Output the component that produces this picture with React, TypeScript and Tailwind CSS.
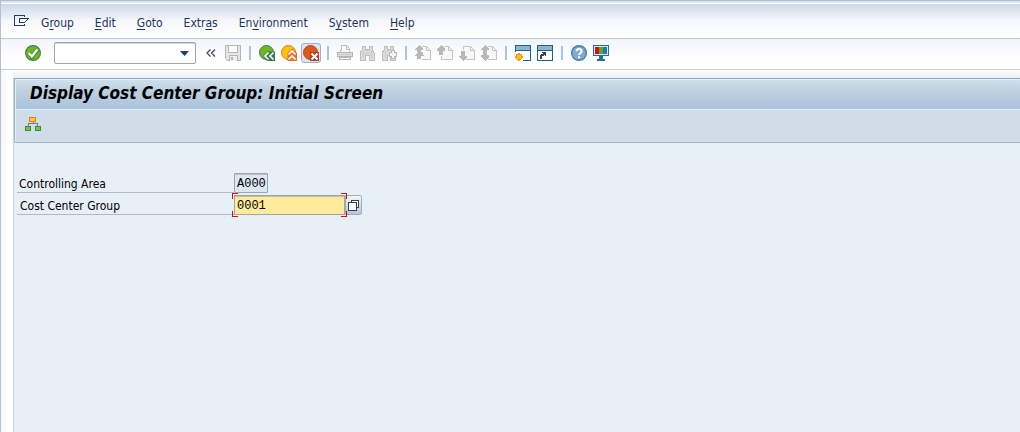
import type { ReactNode } from "react";

const menuItems = [
  { before: "G", key: "r", after: "oup" },
  { before: "", key: "E", after: "dit" },
  { before: "", key: "G", after: "oto" },
  { before: "Extr", key: "a", after: "s" },
  { before: "En", key: "v", after: "ironment" },
  { before: "S", key: "y", after: "stem" },
  { before: "", key: "H", after: "elp" },
];

function Icon({ children, crisp = false }: { children: ReactNode; crisp?: boolean }) {
  return (
    <svg
      width="16"
      height="16"
      viewBox="0 0 16 16"
      fill="none"
      shapeRendering={crisp ? "crispEdges" : "auto"}
      aria-hidden="true"
    >
      {children}
    </svg>
  );
}

function ToolButton({
  label,
  active = false,
  disabled = false,
  children,
}: {
  label: string;
  active?: boolean;
  disabled?: boolean;
  children: ReactNode;
}) {
  return (
    <button
      type="button"
      aria-label={label}
      title={label}
      disabled={disabled}
      className={
        active
          ? "mx-px flex h-5 w-5 shrink-0 items-center justify-center rounded-[3px] border border-[#a3aec6] bg-[#dfe5f0]"
          : "flex h-5 w-[22px] shrink-0 items-center justify-center"
      }
    >
      {children}
    </button>
  );
}

function Separator() {
  return (
    <div className="flex w-3 shrink-0 justify-center">
      <div className="h-[14px] w-[2px] bg-[#aac4dc]" />
    </div>
  );
}

/* ICONS */

function EnterIcon() {
  return (
    <Icon>
      <circle cx="8" cy="8" r="7.4" fill="#71b51d" stroke="#438358" strokeWidth="1.2" />
      <path d="M3.6 8.2 6.8 11.8 12.6 4.6" stroke="#3f8a35" strokeWidth="4" />
      <path d="M3.6 8 6.8 11.4 12.4 4.4" stroke="#fff" strokeWidth="2.3" />
    </Icon>
  );
}

function SaveIcon() {
  return (
    <Icon crisp>
      <path d="M.5.5h15v15h-13l-2-2z" fill="#e6e6e6" stroke="#b5b5b5" />
      <path d="M3.5.5h9v7h-9z" fill="#fafafa" stroke="#b5b5b5" />
      <path d="M4.500 15.500v-5h8v5" fill="#f0f0f0" stroke="#b5b5b5" />
      <path d="M6 12h2v3H6z" fill="#b5b5b5" />
    </Icon>
  );
}

function BackIcon() {
  return (
    <Icon>
      <circle cx="7.5" cy="7.5" r="7" fill="#72b61f" stroke="#397e50" />
      <path d="M4 11 8.500 6.500H16V16H8z" fill="#397e50" />
      <path d="M9.500 7.500 6 11l3.500 3.500M14.500 7.500 11 11l3.500 3.500" stroke="#fff" strokeWidth="1.6" />
    </Icon>
  );
}

function ExitIcon() {
  return (
    <Icon>
      <circle cx="7.5" cy="7.5" r="7" fill="#ffc20e" stroke="#e57522" />
      <path d="M6.5 8 11 3.5 16 8v8H6.5z" fill="#e57027" />
      <path d="m7.5 9.5 3.5-3.5 3.5 3.5M7.5 14.5 11 11l3.5 3.5" stroke="#fff" strokeWidth="1.6" />
    </Icon>
  );
}

function CancelIcon() {
  return (
    <Icon>
      <circle cx="7.5" cy="7.5" r="7" fill="#dc5917" stroke="#b7471d" />
      <path d="M7 7h9v9H7z" fill="#b3401c" />
      <path d="m8.5 8.5 6 6M14.5 8.5l-6 6" stroke="#fff" strokeWidth="2" />
    </Icon>
  );
}

function PrintIcon() {
  return (
    <Icon crisp>
      <path d="M3.500 8V5.500h1V.500h5l3 3V8" fill="#fafafa" stroke="#bdbdbd" />
      <path d="M9.5.500v3.500h3" stroke="#bdbdbd" />
      <path d="M.5 7.500h15v4H.5z" fill="#dedede" stroke="#b5b5b5" />
      <path d="M2 9.500h12" stroke="#c8c8c8" />
      <path d="M2.500 12.500h11v2h-11z" fill="#fafafa" stroke="#b5b5b5" />
    </Icon>
  );
}

function FindIcon() {
  return (
    <Icon crisp>
      <path
        d="M3 1h3v3h4V1h3v4l2 3v7h-5v-5H6v5H1V8l2-3z"
        fill="#dcdcdc"
        stroke="#bebebe"
      />
      <path d="M6 5h4M6 8h4M4 6v7M12 6v7" stroke="#c9c9c9" />
    </Icon>
  );
}

function FindNextIcon() {
  return (
    <Icon crisp>
      <path
        d="M3 1h3v3h3V1h3v4l2 3v7H9v-5H6v5H1V8l2-3z"
        fill="#dcdcdc"
        stroke="#bebebe"
      />
      <path d="M6 5h3M4 6v7" stroke="#c9c9c9" />
      <path
        d="M10.5 5.5h3v2h2v4h-2v2h-3v-2h-2v-4h2z"
        fill="#f5f5f5"
        stroke="#b5b5b5"
      />
    </Icon>
  );
}

function PageIcon({ arrows }: { arrows: string }) {
  return (
    <Icon crisp>
      <path d="M4.500 1.500h7l4 4v9h-11z" fill="#f8f8f8" stroke="#c4c4c4" />
      <path d="M11.5 1v4.5H16" stroke="#c4c4c4" />
      <path d={arrows} fill="#b8b8b8" stroke="#f8f8f8" strokeWidth="2" paintOrder="stroke" />
    </Icon>
  );
}

const firstPage = "M4 0l4 4v1H6v2h2v3l1 1H6v3H2v-3H0v-1l3-3H2V5H0V4z";
const previousPage = "M4 0l4 4v2H6v4H2V6H0V4z";
const nextPage = "M2 6h4v5h2v1l-4 4-4-4v-1h2z";
const lastPage = "M4 0l4 4v1H6v5h2v2l-4 4-4-4v-2h2V5H0V4z";

function NewSessionIcon() {
  return (
    <Icon crisp>
      <path d="M0 0h16v16H0z" fill="#17648f" />
      <path d="M1 1h14v4H1z" fill="#8fb2d2" />
      <path d="M1 6h14v9H1z" fill="#fff" />
      <path d="M0 7h8v9H0z" fill="#fff" />
      <path d="M4 8v8M0 12h8M1.500 9.500l5 5M6.500 9.500l-5 5" stroke="#f39a16" strokeWidth="1.5" />
      <circle cx="4" cy="12" r="2.2" fill="#ffc400" />
    </Icon>
  );
}

function ShortcutIcon() {
  return (
    <Icon crisp>
      <path d="M0 0h16v16H0z" fill="#17648f" />
      <path d="M1 1h14v4H1z" fill="#8fb2d2" />
      <path d="M1 6h14v9H1z" fill="#fff" />
      <path d="M4 14v-3l3-2" stroke="#404040" strokeWidth="2" />
      <path d="M4 7h5v5z" fill="#404040" />
    </Icon>
  );
}

function HelpIcon() {
  return (
    <Icon>
      <circle cx="8" cy="8" r="7.3" fill="#83aace" stroke="#417fa8" strokeWidth="1.4" />
      <path d="M5.6 6.2c0-3 5-3 5 0 0 1.8-2.5 1.7-2.5 3.8" stroke="#fff" strokeWidth="1.9" />
      <path d="M7 11.2h2.1v2H7z" fill="#fff" />
    </Icon>
  );
}

function LayoutIcon() {
  return (
    <Icon crisp>
      <path d="M0 0h16v11H0z" fill="#24709a" />
      <path d="M1 1h14v9H1z" fill="#dce7f0" />
      <path d="M2 2h4v7H2z" fill="#d40d16" />
      <path d="M6 2h4v7H6z" fill="#5baa1d" />
      <path d="M10 2h4v7h-4z" fill="#2475bd" />
      <path d="M6 11h4v3H6z" fill="#24709a" />
      <path d="M4 14h8v2H4z" fill="#24709a" />
    </Icon>
  );
}

function HierarchyIcon() {
  return (
    <Icon crisp>
      <path d="M8 6v2M3.5 11V7.500h9V11" stroke="#71777a" />
      <path d="M4.500 1.500h6v4h-6z" fill="#ffc928" stroke="#e77922" />
      <path d="M.5 10.500h5v4H.5zM10.500 10.500h5v4h-5z" fill="#83bf28" stroke="#3d8654" />
    </Icon>
  );
}

/* Red corner marks around the field that has the focus */
function FocusCorners() {
  return (
    <>
      <span className="pointer-events-none absolute -top-[2px] -left-[2px] h-[6px] w-[6px] border-t border-l border-[#e60012]" />
      <span className="pointer-events-none absolute -top-[2px] -right-[2px] h-[6px] w-[6px] border-t border-r border-[#e60012]" />
      <span className="pointer-events-none absolute -bottom-[2px] -left-[2px] h-[6px] w-[6px] border-b border-l border-[#e60012]" />
      <span className="pointer-events-none absolute -right-[2px] -bottom-[2px] h-[6px] w-[6px] border-r border-b border-[#e60012]" />
    </>
  );
}

export default function App() {
  return (
    <div className="flex min-h-screen flex-col border-l border-[#b4bfd2] bg-white font-['DejaVu_Sans_Condensed','DejaVu_Sans',sans-serif] text-[12px] text-black">
      {/* WINDOW EDGE */}
      <div className="h-1 border-t border-b border-t-[#aebbd0] border-b-white bg-[#dce5f0]" />

      {/* MENU BAR */}
      <nav
        aria-label="Menu"
        className="flex h-[35px] items-center border-b border-[#c2c8d6] bg-linear-to-b from-[#cbd7e8] via-[#f6f8fb] via-50% to-white pt-1 pl-[13px] text-[#1f3263]"
      >
        <button type="button" aria-label="System menu" className="mr-3 pb-1">
          <svg
            width="15"
            height="12"
            viewBox="0 0 15 12"
            fill="none"
            stroke="#223b6d"
            shapeRendering="crispEdges"
            aria-hidden="true"
          >
            <path d="M10.5 2V.5H.5v10h10V9" />
            <path d="M14.5 3.5h-9v4h5l4-4" fill="#fff" />
          </svg>
        </button>
        <div className="flex gap-[21px]">
          {menuItems.map((item) => (
            <button key={item.before + item.key + item.after} type="button">
              {item.before}
              <span className="underline underline-offset-2">{item.key}</span>
              {item.after}
            </button>
          ))}
        </div>
      </nav>

      {/* STANDARD TOOLBAR */}
      <div
        role="toolbar"
        aria-label="Standard toolbar"
        className="flex h-[31px] items-center border-b border-[#c9cedb] bg-linear-to-b from-[#f1f5fb] to-white to-70% pb-[2px] pl-[21px]"
      >
        <ToolButton label="Enter"><EnterIcon /></ToolButton>
        <div className="mr-1 ml-[10px] flex h-[22px] w-[142px] shrink-0 rounded-[2px] border border-[#a0a5a8] bg-white shadow-[inset_0_1px_0_#d3d6d8]">
          <input
            type="text"
            aria-label="Command"
            className="min-w-0 flex-1 bg-transparent px-1 outline-none"
          />
          <button type="button" aria-label="Command history" className="flex w-[22px] items-center justify-center">
            <svg width="9" height="5" viewBox="0 0 9 5" aria-hidden="true">
              <path d="M0 0h9L4.500 5z" fill="#213c70" />
            </svg>
          </button>
        </div>
        <ToolButton label="Close command field">
          <Icon>
            <path d="m7.500 4.500-3.500 3.500 3.500 3.500M12 4.500 8.500 8l3.500 3.500" stroke="#4a4a4a" strokeWidth="1.300" />
          </Icon>
        </ToolButton>
        <ToolButton label="Save" disabled><SaveIcon /></ToolButton>
        <Separator />
        <ToolButton label="Back"><BackIcon /></ToolButton>
        <ToolButton label="Exit"><ExitIcon /></ToolButton>
        <ToolButton label="Cancel" active><CancelIcon /></ToolButton>
        <Separator />
        <ToolButton label="Print" disabled><PrintIcon /></ToolButton>
        <ToolButton label="Find" disabled><FindIcon /></ToolButton>
        <ToolButton label="Find next" disabled><FindNextIcon /></ToolButton>
        <Separator />
        <ToolButton label="First page" disabled><PageIcon arrows={firstPage} /></ToolButton>
        <ToolButton label="Previous page" disabled><PageIcon arrows={previousPage} /></ToolButton>
        <ToolButton label="Next page" disabled><PageIcon arrows={nextPage} /></ToolButton>
        <ToolButton label="Last page" disabled><PageIcon arrows={lastPage} /></ToolButton>
        <Separator />
        <ToolButton label="Create new session"><NewSessionIcon /></ToolButton>
        <ToolButton label="Create shortcut"><ShortcutIcon /></ToolButton>
        <Separator />
        <ToolButton label="Help"><HelpIcon /></ToolButton>
        <ToolButton label="Customize local layout"><LayoutIcon /></ToolButton>
      </div>

      {/* SCREEN AREA */}
      <div className="flex flex-1 flex-col bg-linear-to-r from-[#f3f5fa] to-white to-[6px] pl-3">
        <div className="h-2 bg-linear-to-b from-white to-[#e9edf5]" />
        <main className="flex-1 border-l border-[#ccd6e0] bg-[#e7eff7]">
          <header className="border-t border-b border-l border-t-[#96a9c2] border-b-[#a5b5c6] border-l-[#a2b3c9]">
            <div className="flex h-[31px] items-center border-t border-b border-l border-[#e3edf7] bg-linear-to-b from-[#cfdfec] via-[#bdd0df] via-40% to-[#aac2dc] pl-[14px]">
              <h1 className="pb-1 text-[17px] leading-5 font-bold italic">
                Display Cost Center Group: Initial Screen
              </h1>
            </div>
            <div className="flex h-8 items-center border-l border-[#e3edf7] bg-[#cfdde8] pb-1 pl-[6px]">
              <ToolButton label="Display hierarchy"><HierarchyIcon /></ToolButton>
            </div>
          </header>

          {/* SELECTION FIELDS */}
          <form className="flex flex-col gap-[2px] pt-[30px] pl-[3px]">
            <div className="flex h-5 items-end">
              <label
                htmlFor="controlling-area"
                className="flex h-[18px] w-[217px] items-center border-b border-[#b4b8bb] pl-[2px]"
              >
                Controlling Area
              </label>
              <input
                id="controlling-area"
                type="text"
                readOnly
                defaultValue="A000"
                className="h-5 w-[34px] rounded-[1px] border border-[#a0a5a8] bg-[#dce7f2] pt-px pl-[2px] font-['Liberation_Mono',monospace] text-[12px] shadow-[inset_0_1px_0_#bcc3c9] outline-none"
              />
            </div>
            <div className="flex h-5 items-end">
              <label
                htmlFor="cost-center-group"
                className="flex h-[18px] w-[217px] items-center border-b border-[#b4b8bb] pl-[3px]"
              >
                Cost Center Group
              </label>
              <div className="relative">
                <input
                  id="cost-center-group"
                  type="text"
                  defaultValue="0001"
                  className="block h-5 w-[111px] border border-[#a0a5a8] bg-[#ffeb9b] pt-px pl-[2px] font-['Liberation_Mono',monospace] text-[12px] shadow-[inset_0_1px_0_#c4bd9b] outline-none"
                />
                <FocusCorners />
              </div>
              <button
                type="button"
                aria-label="Choose cost center group"
                className="flex h-5 w-[17px] items-center justify-center rounded-r-[2px] border border-[#a3acba] bg-linear-to-b from-[#f4f7fc] to-[#b3c4df]"
              >
                <svg
                  width="11"
                  height="11"
                  viewBox="0 0 11 11"
                  fill="#fff"
                  stroke="#394248"
                  shapeRendering="crispEdges"
                  aria-hidden="true"
                >
                  <path d="M3.500.500h7v7h-7z" />
                  <path d="M.500 2.500h8v8h-8z" />
                </svg>
              </button>
            </div>
          </form>
        </main>
      </div>
    </div>
  );
}
